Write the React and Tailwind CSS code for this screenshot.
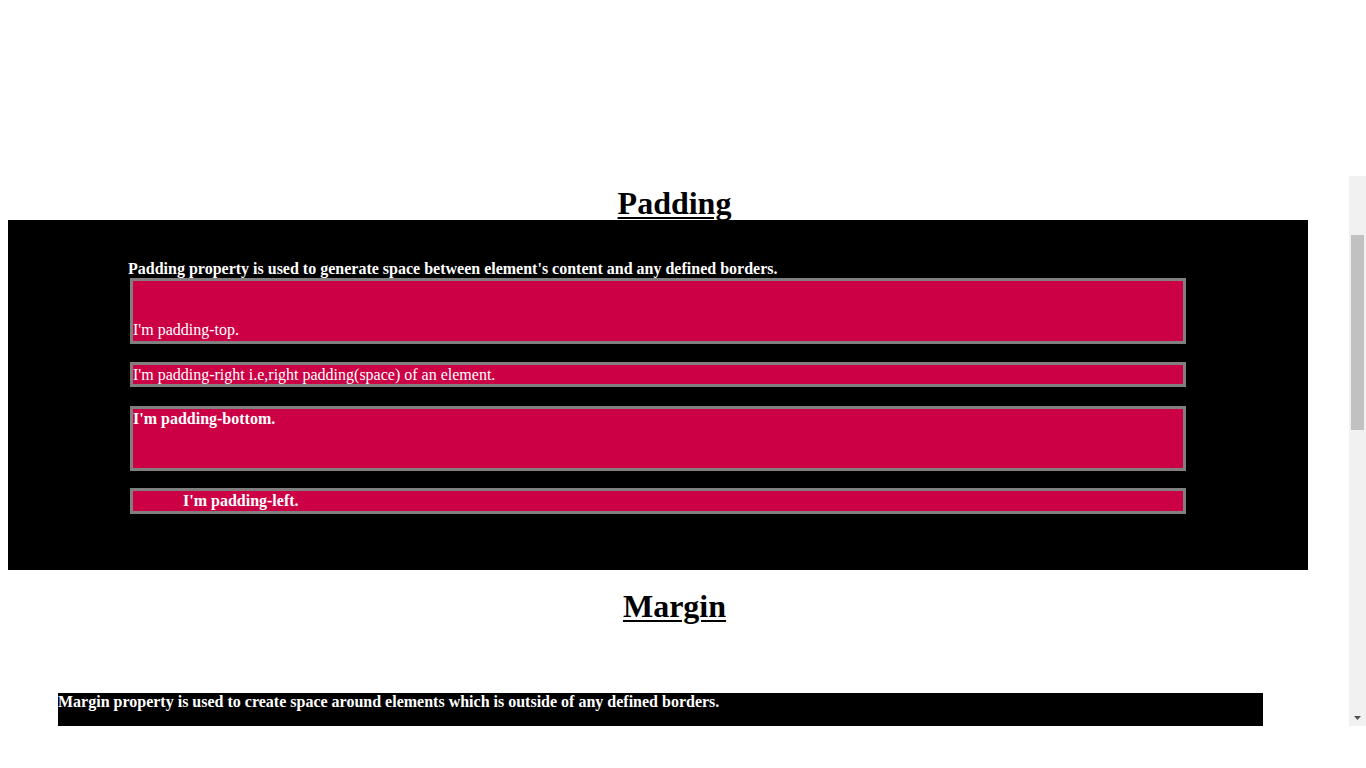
export default function App() {
  return (
    <div className="h-screen bg-white font-['Liberation_Serif',serif] text-black">
      <div className="h-[176px]" />
      <div className="flex h-[550px]">
        <div className="flex-1 overflow-hidden pt-[10px]">
          <h1 className="text-center text-[32px] font-bold leading-[34px] underline decoration-2 underline-offset-[3px]">
            Padding
          </h1>
          <div className="ml-[8px] h-[350px] w-[1300px] bg-black pt-[40px] text-[16px] text-white">
            <p className="pl-[120px] font-bold leading-[18px]">
              Padding property is used to generate space between element's content and any defined borders.
            </p>
            <div className="ml-[122px] w-[1056px] border-[3px] border-[#808080] bg-[#cc0044] pb-[2px] pt-[40px] leading-[18px]">
              I'm padding-top.
            </div>
            <div className="ml-[122px] mt-[18px] w-[1056px] border-[3px] border-[#808080] bg-[#cc0044] pr-[40px] leading-[19px]">
              I'm padding-right i.e,right padding(space) of an element.
            </div>
            <div className="ml-[122px] mt-[19px] w-[1056px] border-[3px] border-[#808080] bg-[#cc0044] pb-[40px] font-bold leading-[19px]">
              I'm padding-bottom.
            </div>
            <div className="ml-[122px] mt-[17px] w-[1056px] border-[3px] border-[#808080] bg-[#cc0044] pl-[50px] font-bold leading-[20px]">
              I'm padding-left.
            </div>
          </div>
          <h1 className="mt-[18px] text-center text-[32px] font-bold leading-[37px] underline decoration-2 underline-offset-[3px]">
            Margin
          </h1>
          <div className="ml-[58px] mt-[68px] h-[120px] w-[1205px] bg-black text-[16px] font-bold leading-[18px] text-white">
            Margin property is used to create space around elements which is outside of any defined borders.
          </div>
        </div>
        <div className="flex w-[17px] flex-col bg-[#f1f1f1]">
          <div className="mx-[2px] mt-[59px] h-[195px] bg-[#c1c1c1]" />
          <div className="mt-auto flex h-[17px] items-center justify-center">
            <svg width="7" height="4" viewBox="0 0 7 4">
              <polygon points="0,0 7,0 3.5,4" fill="#505050" />
            </svg>
          </div>
        </div>
      </div>
    </div>
  );
}
